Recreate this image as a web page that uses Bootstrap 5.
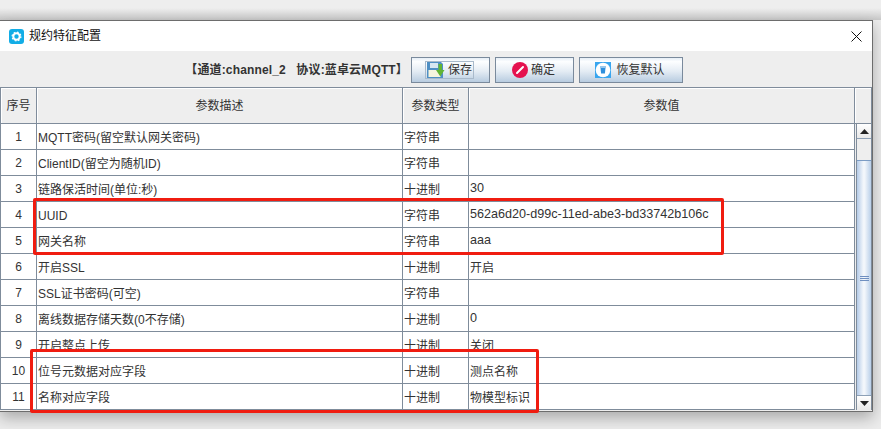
<!DOCTYPE html>
<html lang="zh">
<head>
<meta charset="utf-8">
<title>规约特征配置</title>
<link href="https://cdn.jsdelivr.net/npm/bootstrap@5.3.0/dist/css/bootstrap.min.css" rel="stylesheet">
<style>
html,body{margin:0;height:429px;overflow:hidden;background:#ececec;}
body{font:12px/1 "Liberation Sans","Noto Sans CJK SC",sans-serif;color:#333;padding-top:20px;background:linear-gradient(#eee 0,#eee 8px,#c9c9c9 20px,#ececec 20px);position:relative;}
.swin{width:873px;height:392px;border:solid #6d6d6d;border-width:1px 1px 1px 0;background:#eee;box-shadow:0 6px 14px rgba(0,0,0,.28);}
.stitle{height:30px;background:#fff;padding-left:9px;font-size:12px;color:#111;}
.stitle .ttl{margin-left:5px;}
.sclose{margin-left:auto;margin-right:10px;}
.sbar{height:36px;padding-top:1px;padding-right:189px;}
.sinfo{font-weight:700;margin-right:-2px;font-size:12px;white-space:pre;padding-top:1px;letter-spacing:.15px;}
.sbtn{height:26px;border:1px solid #7a8a9c;border-radius:0;background:linear-gradient(#e6eef6 0,#fdfeff 15%,#e4ecf4 55%,#b8cce0 100%);padding:0 2px 0 0;color:#333;font-size:12px;display:flex;align-items:center;justify-content:center;gap:3px;margin-left:5px;}
.sbtn.bsave{width:79px;}
.sbtn.bok{width:79px;}
.sbtn.bdef{width:104px;gap:5px;}
.sfocus{border:1px solid #a9bacb;display:flex;align-items:center;gap:3px;height:18px;padding:0 1px;}
.sgrid{border-collapse:separate;border-spacing:0;table-layout:fixed;width:871px;margin:0;border-top:1px solid #7f8c9b;border-left:1px solid #7f8c9b;font-size:12px;}
.sgrid th,.sgrid td{padding:0;border-right:1px solid #7f8c9b;border-bottom:1px solid #7f8c9b;white-space:nowrap;overflow:hidden;color:#333;font-weight:400;}
.sgrid th{height:36px;background:#eee;text-align:center;box-shadow:inset 1px 1px 0 #fff;}
.sgrid td{height:26px;background:#fff;padding:2px 0 0 1px;font-size:12px;}
.sgrid td.snum{text-align:center;padding:0;}
.sgrid td.slat{font-size:12.6px;padding-top:0;}
.sgrid td.strack{padding:0;background:#eee;vertical-align:top;border-bottom:0;}
.c1{width:36px}.c2{width:366px}.c3{width:66px}.c4{width:386px}.c5{width:17px}
.sscroll{height:286px;display:flex;flex-direction:column;border-left:1px solid #7f8c9b;margin-left:1px;}
.sarr{height:15px;flex:none;background:linear-gradient(#fff,#e8e8e8);display:flex;align-items:center;justify-content:center;border-bottom:1px solid #8da0b6;}
.sarr.dn{border-bottom:0;border-top:1px solid #8da0b6;}
.sgap{height:21px;flex:none;background:#eee;}
.sthumb{flex:1;border-top:1px solid #7b9cc4;background:linear-gradient(90deg,#b4cbe8,#f2f6fb 45%,#f2f6fb 55%,#b9cfe9);display:flex;align-items:center;justify-content:center;}
.sgrip{width:9px;height:5px;border-top:1px solid #6f8fc0;border-bottom:1px solid #6f8fc0;position:relative;}
.sgrip::after{content:"";position:absolute;left:0;right:0;top:1px;height:1px;background:#6f8fc0;}
.smark{position:absolute;border:3px solid #f01c10;border-radius:2px;pointer-events:none;}
.m1{left:33px;top:198px;width:691px;height:57px;}
.m2{left:30px;top:349px;width:509px;height:64px;}
</style>
</head>
<body>
<div class="swin d-flex flex-column">
  <div class="stitle d-flex align-items-center flex-shrink-0">
    <svg width="15" height="15" viewBox="0 0 15 15"><rect width="15" height="15" rx="3" fill="#12ade6"/><circle cx="7.5" cy="7.5" r="3.2" fill="none" stroke="#fff" stroke-width="2"/><circle cx="7.5" cy="7.5" r="4.4" fill="none" stroke="#fff" stroke-width="1.2" stroke-dasharray="1.7 1.75"/></svg>
    <span class="ttl">规约特征配置</span>
    <svg class="sclose" width="11" height="11" viewBox="0 0 11 11"><path d="M.5.5l10 10M10.5.5l-10 10" stroke="#111" stroke-width="1" fill="none"/></svg>
  </div>
  <div class="sbar d-flex align-items-center justify-content-end flex-shrink-0">
    <span class="sinfo">【通道:channel_2   协议:蓝卓云MQTT】</span>
    <button type="button" class="btn sbtn bsave"><span class="sfocus">
      <svg width="18" height="16" viewBox="0 0 18 16"><path d="M0 0h14l2 2v14H0z" fill="#4f8fc4"/><rect x="3" y="1" width="8" height="5" fill="#d7e6f1"/><rect x="1.500" y="8" width="12" height="7" fill="#f6f5df"/><path d="M11.500 2h3.500v6h2.500l-4.200 6.500L9 8h2.500z" fill="#62b534"/></svg>保存</span></button>
    <button type="button" class="btn sbtn bok">
      <svg width="16" height="16" viewBox="0 0 16 16"><circle cx="8" cy="8" r="8" fill="#e5124f"/><path d="M5 11l6-6" stroke="#fff" stroke-width="2" stroke-linecap="round"/></svg>确定</button>
    <button type="button" class="btn sbtn bdef">
      <svg width="16" height="16" viewBox="0 0 16 16"><rect width="16" height="16" fill="#39a6ef"/><circle cx="8" cy="8" r="7.300" fill="#fff"/><path d="M5.500 6h5l-.6 5.500H6.100z" fill="#2f8fdc"/><rect x="5" y="4.500" width="6" height="1" fill="#2f8fdc"/></svg>恢复默认</button>
  </div>
  <table class="sgrid">
    <colgroup><col class="c1"><col class="c2"><col class="c3"><col class="c4"><col class="c5"></colgroup>
    <thead><tr><th>序号</th><th>参数描述</th><th>参数类型</th><th>参数值</th><th></th></tr></thead>
    <tbody>
      <tr><td class="snum">1</td><td>MQTT密码(留空默认网关密码)</td><td>字符串</td><td></td>
        <td class="strack" rowspan="11"><div class="sscroll">
          <div class="sarr"><svg width="9" height="5" viewBox="0 0 9 5"><path d="M4.500 0L9 5H0z" fill="#222"/></svg></div>
          <div class="sgap"></div>
          <div class="sthumb"><div class="sgrip"></div></div>
          <div class="sarr dn"><svg width="9" height="5" viewBox="0 0 9 5"><path d="M0 0h9L4.500 5z" fill="#222"/></svg></div>
        </div></td></tr>
      <tr><td class="snum">2</td><td>ClientID(留空为随机ID)</td><td>字符串</td><td></td></tr>
      <tr><td class="snum">3</td><td>链路保活时间(单位:秒)</td><td>十进制</td><td class="slat">30</td></tr>
      <tr><td class="snum">4</td><td>UUID</td><td>字符串</td><td class="slat">562a6d20-d99c-11ed-abe3-bd33742b106c</td></tr>
      <tr><td class="snum">5</td><td>网关名称</td><td>字符串</td><td class="slat">aaa</td></tr>
      <tr><td class="snum">6</td><td>开启SSL</td><td>十进制</td><td>开启</td></tr>
      <tr><td class="snum">7</td><td>SSL证书密码(可空)</td><td>字符串</td><td></td></tr>
      <tr><td class="snum">8</td><td>离线数据存储天数(0不存储)</td><td>十进制</td><td class="slat">0</td></tr>
      <tr><td class="snum">9</td><td>开启整点上传</td><td>十进制</td><td>关闭</td></tr>
      <tr><td class="snum">10</td><td>位号元数据对应字段</td><td>十进制</td><td>测点名称</td></tr>
      <tr><td class="snum">11</td><td>名称对应字段</td><td>十进制</td><td>物模型标识</td></tr>
    </tbody>
  </table>
</div>
<div class="smark m1"></div>
<div class="smark m2"></div>
<script src="https://cdn.jsdelivr.net/npm/bootstrap@5.3.0/dist/js/bootstrap.bundle.min.js"></script>
</body>
</html>
